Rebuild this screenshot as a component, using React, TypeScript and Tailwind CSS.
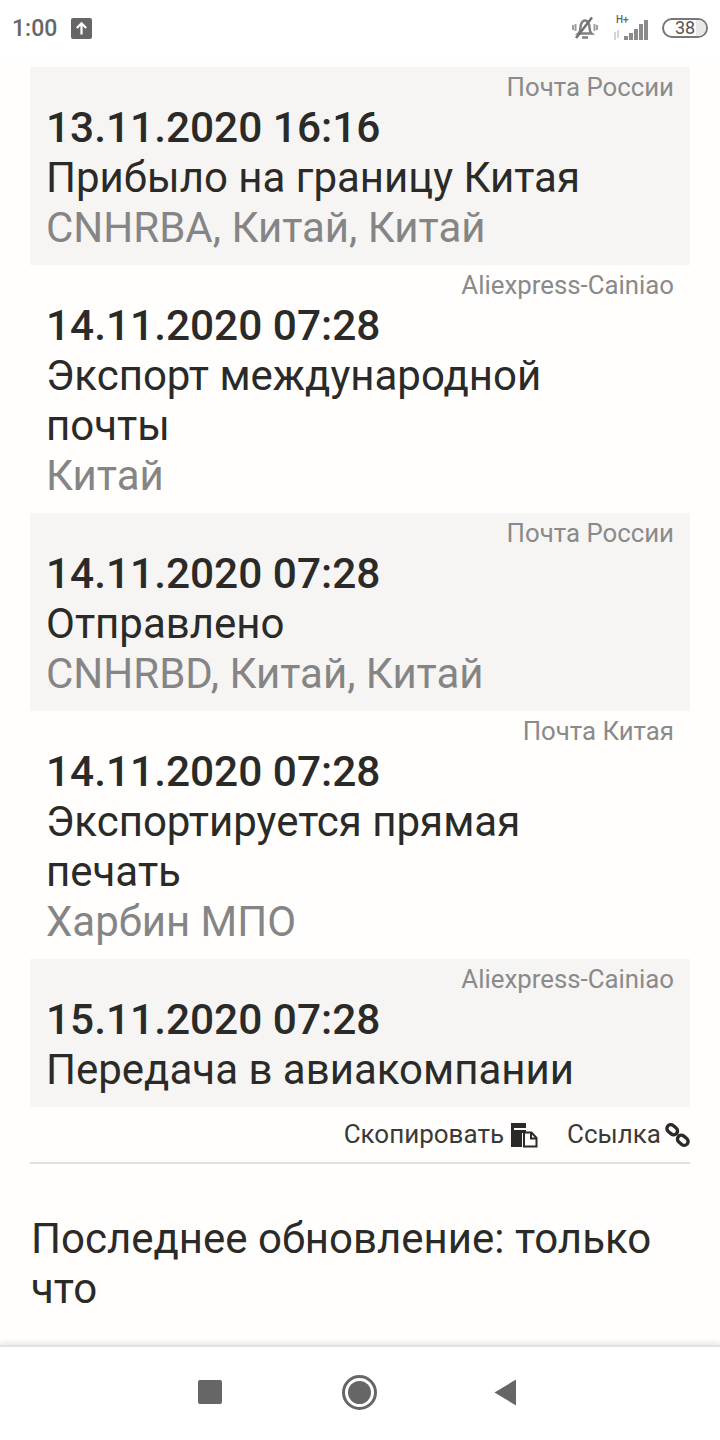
import React from "react";

interface ITrackEvent {
    source: string,
    date: string,
    title: string,
    place?: string,
    shaded: boolean,
}

const events: ITrackEvent[] = [
    { source: "Почта России", date: "13.11.2020 16:16", title: "Прибыло на границу Китая", place: "CNHRBA, Китай, Китай", shaded: true },
    { source: "Aliexpress-Cainiao", date: "14.11.2020 07:28", title: "Экспорт международной почты", place: "Китай", shaded: false },
    { source: "Почта России", date: "14.11.2020 07:28", title: "Отправлено", place: "CNHRBD, Китай, Китай", shaded: true },
    { source: "Почта Китая", date: "14.11.2020 07:28", title: "Экспортируется прямая печать", place: "Харбин МПО", shaded: false },
    { source: "Aliexpress-Cainiao", date: "15.11.2020 07:28", title: "Передача в авиакомпании", shaded: true },
];

function StatusBar() {
    return (
        <div className="h-[56px] bg-white flex items-center justify-between pl-[12px] pr-[12px]">
            <div className="flex items-center gap-[14px]">
                <span className="text-[23px] font-medium leading-none text-[#666666]">1:00</span>
                <svg width="21" height="21" viewBox="0 0 21 21">
                    <rect width="21" height="21" rx="2" fill="#666666" />
                    <path d="M10.5 16.5V5.5M5.8 10l4.7-4.7 4.7 4.7" fill="none" stroke="#ffffff" strokeWidth="2.2" />
                </svg>
            </div>
            <div className="flex items-center">
                <svg width="26" height="24" viewBox="0 0 26 24" className="mr-[15px]">
                    <path d="M6.500 17.500c2.500-2 1.500-6 2.500-9 .8-2.500 2.500-4 4-4s3.200 1.500 4 4c1 3 0 7 2.500 9z" fill="none" stroke="#808080" strokeWidth="2.500" />
                    <path d="M10 21.500h6" stroke="#808080" strokeWidth="2.500" />
                    <path d="M4 22L20 1.500" stroke="#707070" strokeWidth="2.500" />
                    <path d="M3.500 8v7M1 9v5M22.500 8v7M25 9v5" stroke="#a0a0a0" strokeWidth="2" />
                </svg>
                <svg width="38" height="26" viewBox="0 0 38 26" className="mr-[11px]">
                    <text x="3" y="8" fontSize="10" fontWeight="500" fill="#666666" fontFamily="Roboto, sans-serif">H+</text>
                    <path d="M2 17v8M5 15v8" stroke="#c8c8c8" strokeWidth="1.500" />
                    <rect x="11" y="21" width="4" height="4" fill="#8a8a8a" />
                    <rect x="16" y="18" width="4" height="7" fill="#8a8a8a" />
                    <rect x="21" y="14" width="4" height="11" fill="#8a8a8a" />
                    <rect x="26" y="9" width="4" height="16" fill="#8a8a8a" />
                    <rect x="31" y="5" width="4" height="20" fill="#8a8a8a" />
                </svg>
                <div className="relative w-[46px] h-[20px] rounded-full border-2 border-[#777777] flex items-center justify-center overflow-hidden">
                    <div className="absolute right-0 top-0 bottom-0 w-[10px] bg-[#e8e8e8]" />
                    <span className="relative text-[18px] leading-none text-[#555555]">38</span>
                </div>
            </div>
        </div>
    );
}

function EventCard({ event }: { event: ITrackEvent }) {
    return (
        <div className={`pl-[16px] pr-[16px] pb-[12px] ${event.shaded ? "bg-[#f6f5f3]" : ""}`}>
            <div className="h-[36px] text-right text-[25.8px] leading-[41px] text-[#8a8a8a]">{event.source}</div>
            <div className="text-[42.4px] leading-[50px] font-medium text-[#2a2a28]">{event.date}</div>
            <div className="pr-[20px] text-[42px] leading-[50px] text-[#2a2a28]">{event.title}</div>
            {event.place && <div className="text-[42px] leading-[50px] text-[#858585]">{event.place}</div>}
        </div>
    );
}

function CopyIcon() {
    return (
        <svg width="28" height="26" viewBox="0 0 28 26">
            <path d="M1 1h15v5H4v2h12v3h-4v14H1z" fill="#2a2a28" />
            <path d="M14 10.500h7.500l5 5.500v8.500H14z" fill="#fffefc" stroke="#2a2a28" strokeWidth="2" />
            <path d="M21 10.500v6h5.500" fill="none" stroke="#2a2a28" strokeWidth="2" />
        </svg>
    );
}

function LinkIcon() {
    return (
        <svg width="25" height="26" viewBox="0 0 26 26">
            <rect x="1.500" y="3.500" width="12" height="8" rx="4" transform="rotate(40 7.500 7.500)" fill="none" stroke="#2a2a28" strokeWidth="3.500" />
            <rect x="12.500" y="14.500" width="12" height="8" rx="4" transform="rotate(40 18.500 18.500)" fill="none" stroke="#2a2a28" strokeWidth="3.500" />
        </svg>
    );
}

function NavBar() {
    return (
        <div className="h-[95px] bg-white border-t-2 border-[#e2e2e0] shadow-[0_-3px_4px_rgba(0,0,0,0.08)] flex items-center pl-[198px] pb-[3px]">
            <div className="w-[24px] h-[24px] rounded-[2px] bg-[#666666]" />
            <div className="ml-[120px] w-[35px] h-[35px] rounded-full border-[3px] border-[#666666] flex items-center justify-center">
                <div className="w-[23px] h-[23px] rounded-full bg-[#666666]" />
            </div>
            <svg width="23" height="27" viewBox="0 0 23 27" className="ml-[117px]">
                <path d="M22 .5v26L.5 13.500z" fill="#666666" />
            </svg>
        </div>
    );
}

export default function App() {
    return (
        <div className="w-[720px] h-[1440px] bg-[#fffefc] flex flex-col overflow-hidden font-['Roboto',sans-serif]">
            <StatusBar />
            <div className="flex-1 px-[30px] pt-[11px]">
                {events.map((event, i) => <EventCard key={i} event={event} />)}
                <div className="h-[57px] flex items-center justify-end border-b-2 border-[#e0e0de] text-[26px] text-[#3a3a38]">
                    <span>Скопировать</span>
                    <span className="ml-[6px]"><CopyIcon /></span>
                    <span className="ml-[29px]">Ссылка</span>
                    <span className="ml-[4px]"><LinkIcon /></span>
                </div>
                <div className="mt-[50px] pl-[1px] text-[42px] leading-[50px] text-[#2a2a28]">Последнее обновление: только что</div>
            </div>
            <NavBar />
        </div>
    );
}
